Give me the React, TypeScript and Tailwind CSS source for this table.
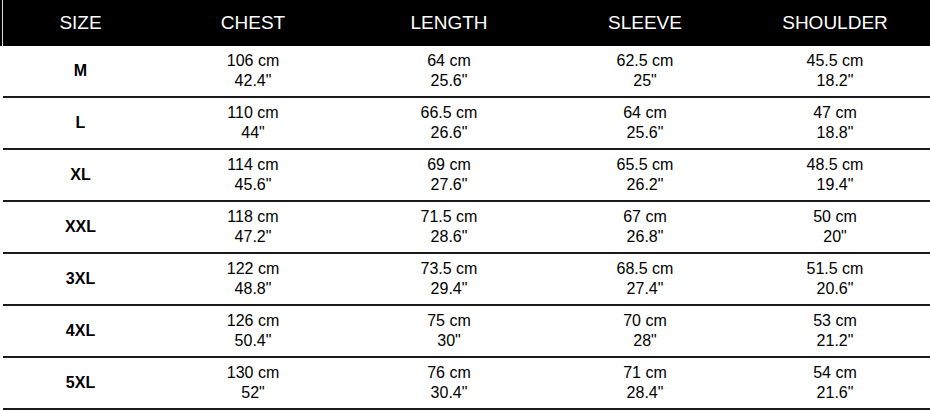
const columns = ["SIZE", "CHEST", "LENGTH", "SLEEVE", "SHOULDER"];

const rows = [
  { size: "M", chest: ["106 cm", '42.4"'], length: ["64 cm", '25.6"'], sleeve: ["62.5 cm", '25"'], shoulder: ["45.5 cm", '18.2"'] },
  { size: "L", chest: ["110 cm", '44"'], length: ["66.5 cm", '26.6"'], sleeve: ["64 cm", '25.6"'], shoulder: ["47 cm", '18.8"'] },
  { size: "XL", chest: ["114 cm", '45.6"'], length: ["69 cm", '27.6"'], sleeve: ["65.5 cm", '26.2"'], shoulder: ["48.5 cm", '19.4"'] },
  { size: "XXL", chest: ["118 cm", '47.2"'], length: ["71.5 cm", '28.6"'], sleeve: ["67 cm", '26.8"'], shoulder: ["50 cm", '20"'] },
  { size: "3XL", chest: ["122 cm", '48.8"'], length: ["73.5 cm", '29.4"'], sleeve: ["68.5 cm", '27.4"'], shoulder: ["51.5 cm", '20.6"'] },
  { size: "4XL", chest: ["126 cm", '50.4"'], length: ["75 cm", '30"'], sleeve: ["70 cm", '28"'], shoulder: ["53 cm", '21.2"'] },
  { size: "5XL", chest: ["130 cm", '52"'], length: ["76 cm", '30.4"'], sleeve: ["71 cm", '28.4"'], shoulder: ["54 cm", '21.6"'] },
];

// kolonnebredder tilpasset bildet
const grid = "grid grid-cols-[155px_190px_202px_190px_190px]";

const Cell = ({ lines }: { lines: string[] }) => (
  <div className="flex flex-col items-center justify-center text-[16px] leading-[20px] text-black">
    {lines.map((l, i) => (
      <span key={i}>{l}</span>
    ))}
  </div>
);

export default function App() {
  return (
    <div className="w-[930px] h-[410px] bg-white overflow-hidden" style={{ fontFamily: '"Liberation Sans", Arial, sans-serif' }}>
      {/* header */}
      <div className="flex h-[46px] bg-black">
        <div className="w-[2px] bg-black" />
        <div className="w-[1px] bg-[#ddd]" />
        <div className={`${grid} flex-1 text-white text-[19px]`}>
          {columns.map((c) => (
            <div key={c} className="flex items-center justify-center">
              {c}
            </div>
          ))}
        </div>
      </div>

      {/* rows */}
      <div className="ml-[3px]">
        {rows.map((r) => (
          <div key={r.size} className={`${grid} h-[52px] border-b-2 border-[#1a1a1a]`}>
            <div className="flex items-center justify-center font-bold text-[16px] text-black">{r.size}</div>
            <Cell lines={r.chest} />
            <Cell lines={r.length} />
            <Cell lines={r.sleeve} />
            <Cell lines={r.shoulder} />
          </div>
        ))}
      </div>
    </div>
  );
}
